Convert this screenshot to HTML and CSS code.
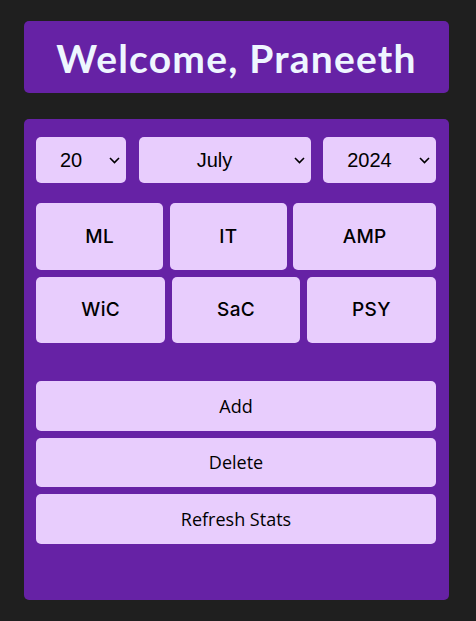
FILE: index.html
```html
<!DOCTYPE html>
<html lang="en">
<head>
<meta charset="utf-8">
<title>Welcome</title>
<link rel="stylesheet" href="styles.css">
</head>
<body>
<main class="page">
  <header class="banner">
    <h1 class="title">Welcome, Praneeth</h1>
  </header>
  <section class="panel">
    <div class="date-row">
      <div class="picker picker-day">
        <select class="select"><option>20</option></select>
        <svg class="chev" width="11" height="7" viewBox="0 0 11 7"><path d="M1 1 L5.5 5.5 L10 1" fill="none" stroke="#000" stroke-width="1.6"/></svg>
      </div>
      <div class="picker picker-month">
        <select class="select"><option>July</option></select>
        <svg class="chev" width="11" height="7" viewBox="0 0 11 7"><path d="M1 1 L5.5 5.5 L10 1" fill="none" stroke="#000" stroke-width="1.6"/></svg>
      </div>
      <div class="picker picker-year">
        <select class="select"><option>2024</option></select>
        <svg class="chev" width="11" height="7" viewBox="0 0 11 7"><path d="M1 1 L5.5 5.5 L10 1" fill="none" stroke="#000" stroke-width="1.6"/></svg>
      </div>
    </div>
    <div class="subjects">
      <button class="subject">ML</button>
      <button class="subject">IT</button>
      <button class="subject">AMP</button>
      <button class="subject">WiC</button>
      <button class="subject">SaC</button>
      <button class="subject">PSY</button>
    </div>
    <div class="actions">
      <button class="action">Add</button>
      <button class="action">Delete</button>
      <button class="action">Refresh Stats</button>
    </div>
  </section>
</main>
</body>
</html>
```
FILE: styles.css
```css
html, body {
  margin: 0;
  padding: 0;
  background: #1f1f1f;
}
.page {
  padding: 21px 27px 21px 24px;
  display: flex;
  flex-direction: column;
  gap: 26px;
}
.banner {
  background: #6622a5;
  border-radius: 5px;
  height: 72px;
  display: flex;
  align-items: center;
  justify-content: center;
}
.title {
  margin: 0;
  font-family: Lato, "DejaVu Sans", sans-serif;
  font-weight: 700;
  font-size: 39px;
  color: #eef6ff;
  letter-spacing: 1.2px;
  padding-top: 2px;
}
.panel {
  background: #6622a5;
  border-radius: 5px;
  padding: 18px 13px 57px 12px;
  height: 481px;
  box-sizing: border-box;
  display: flex;
  flex-direction: column;
}
.date-row {
  display: flex;
  gap: 12.5px;
}
.picker {
  position: relative;
  height: 46px;
}
.picker-day { width: 90px; }
.picker-month { width: 172px; }
.picker-year { width: 113px; }
.select {
  appearance: none;
  -webkit-appearance: none;
  width: 100%;
  height: 100%;
  border: none;
  border-radius: 5px;
  background: #e8cdfd;
  font-family: "Liberation Sans", Arial, sans-serif;
  font-size: 20px;
  color: #000;
  text-align: center;
  text-align-last: center;
  padding: 0 20px 0 0;
  box-sizing: border-box;
}
.chev {
  position: absolute;
  right: 6px;
  top: 20px;
  pointer-events: none;
}
.subjects {
  display: flex;
  flex-wrap: wrap;
  gap: 7px 6.5px;
  margin-top: 20px;
}
.subject {
  flex: 1 1 auto;
  height: 66.5px;
  padding: 0 40px;
  border: none;
  border-radius: 5px;
  background: #e8cdfd;
  font-family: Inter, "Noto Sans", sans-serif;
  font-weight: 500;
  font-size: 19px;
  letter-spacing: 0.3px;
  color: #000;
}
.actions {
  display: flex;
  flex-direction: column;
  gap: 7px;
  margin-top: 38px;
}
.action {
  height: 49.5px;
  border: none;
  border-radius: 5px;
  background: #e8cdfd;
  font-family: "Open Sans", "Noto Sans", sans-serif;
  font-size: 18px;
  color: #000;
}
```
